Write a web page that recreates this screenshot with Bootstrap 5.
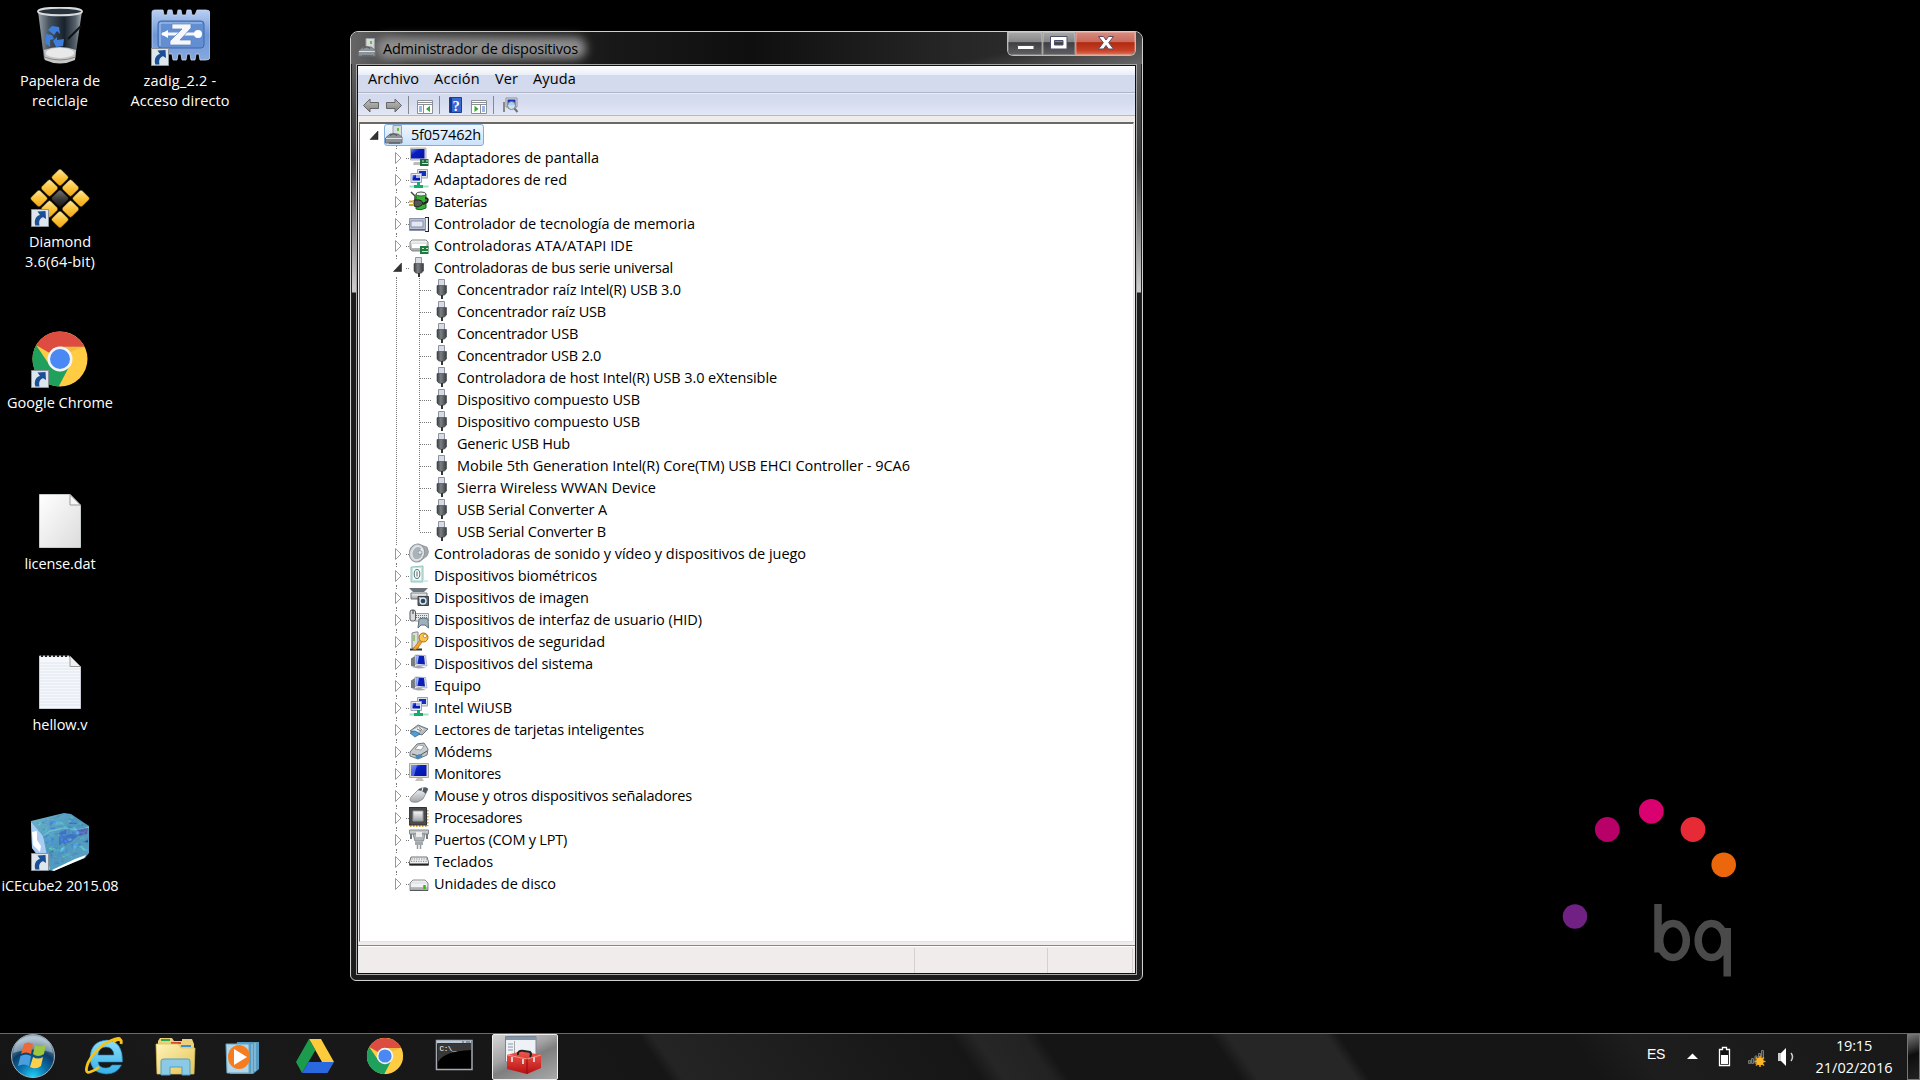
<!DOCTYPE html>
<html lang="es">
<head>
<meta charset="utf-8">
<meta name="viewport" content="width=device-width, initial-scale=1">
<title>Administrador de dispositivos</title>
<link rel="stylesheet" href="https://cdn.jsdelivr.net/npm/bootstrap@5.3.0/dist/css/bootstrap.min.css">
<style>
body{background:#000;color:#000;font:14.5px/20px "Open Sans","Noto Sans",sans-serif;letter-spacing:-.35px;width:1920px;height:1080px}
svg{display:block;flex:none}
.desktop-icons{padding-top:7px;width:240px}
.shortcut{width:120px;height:161px;color:#fff;text-align:center;white-space:nowrap}
.shortcut .pic{width:60px;height:60px}
.label-text{padding-top:4px;width:130px}
.win{position:absolute;left:350px;top:31px;width:793px;height:950px;border:1px solid #cfcfcf;border-radius:8px 8px 6px 6px;background:#161616;padding:0 5px 5px;box-shadow:inset 0 0 0 1px #222}
.win-edges{background:linear-gradient(#6f6f6f,#4a4a4a 80px,#3b3b3b 130px,#c9c9c9 255px,#c9c9c9 260px,#1c1c1c 261px,#1c1c1c)}
.title-strip{height:32px;margin:0 -5px;border-radius:7px 7px 0 0;padding-left:7px;background:linear-gradient(168deg,rgba(0,0,0,0) 60%,rgba(120,120,120,.75) 100%) right/330px 100% no-repeat,linear-gradient(90deg,#666,#3c3c3c 60px,#181818 260px,#0f0f0f 400px,#262626 600px,#333)}
.title-glow{position:relative;z-index:0;margin-left:5px;padding-top:1px}
.title-glow::before{content:"";position:absolute;z-index:-1;inset:-1px -8px 0 -6px;background:#8f8f8f;filter:blur(5px);border-radius:10px}
.caption-btns{height:24px;margin-right:6px;border:1px solid #bbb;border-top:0;border-radius:0 0 6px 6px;overflow:hidden}
.cap{border-right:1px solid #a5a5a5;box-shadow:inset 0 0 0 1px rgba(255,255,255,.22);background:linear-gradient(#aaa,#858585 44%,#3f3f43 46%,#616163)}
.cap.close-btn{border:0;background:linear-gradient(#d98c80,#c9695a 44%,#b02a10 46%,#c64026 80%,#d77a60)}
.client{flex:1;border:1px solid #a5a5a5;box-shadow:inset 0 0 0 1px #111;padding:1px;background:#f0eceb}
.menu-strip{height:27px;padding-left:10px;gap:15px;background:linear-gradient(#fff,#e9edf7 9px,#d4daed 9.5px,#d4daed);border-bottom:1px solid #b0b5c5}
.tool-strip{height:22px;margin-top:1px;background:linear-gradient(#d4daed,#d6dcef 40%,#e3e8f6);border-bottom:1px solid #b4b9ca}
.tree-pane{flex:1;margin-top:6px;margin-left:1px;margin-right:1px;background:#fff;border:2px solid #696969;border-right:1px solid #e3e3e3;border-bottom:1px solid #e3e3e3;border-left-width:1px}
.node{height:22px;line-height:22px;white-space:pre}
.node>span{padding-top:.6px}
.root-sel{height:22px;border:1px solid #84acdd;border-radius:3px;background:linear-gradient(#eff6fd,#cbe2fa);width:100px;line-height:20px;margin-left:5px}
.root-sel span{margin-left:6px}
.status{height:28px;border-top:1px solid #868686;margin-top:3px;box-shadow:inset 0 1px #fff}
.status div{border-right:1px solid #d5d1d0;margin-top:2px}
.bq-word{position:absolute}
.taskbar{position:absolute;left:0;right:0;bottom:0;height:47px;border-top:1px solid #6a6a6a;background:linear-gradient(55deg,#151515,#191919 10%,#161616 34.300%,#242424 35%,#181818 47%,#161616 50.300%,#262626 51.500%,#222 54%,#151515 54.800%,#151515 63.600%,#262626 64.500%,#262626 69.500%,#151515 70.200%,#151515 82%,#1d1d1d 85%,#181818);color:#fff}
.active-task{width:66px;height:46px;border:1px solid #eee;border-radius:2px;background:linear-gradient(155deg,#d5d5d5,#a3a3a3 40%,#7f7f7f 55%,#a9a9a9)}
.show-desk{width:13px;height:46px;border:1px solid #777;background:linear-gradient(160deg,#777,#333 30%,#0e0e0e 45%,#222)}
</style>
</head>
<body class="overflow-hidden position-relative">

<svg width="0" height="0" class="position-absolute">
<defs>
<linearGradient id="gGrey" x2="0" y2="1"><stop stop-color="#fafafa"/><stop offset="1" stop-color="#9ea3a8"/></linearGradient>
<linearGradient id="gScr" x2="1" y2="1"><stop stop-color="#6f8ff0"/><stop offset=".35" stop-color="#0a1fc4"/><stop offset="1" stop-color="#0414a0"/></linearGradient>
<linearGradient id="gGold" x2="1" y2="1"><stop stop-color="#ffe9a8"/><stop offset=".5" stop-color="#fcc53c"/><stop offset="1" stop-color="#f0a010"/></linearGradient>
<linearGradient id="gDark" x2="1" y2="1"><stop stop-color="#777"/><stop offset=".6" stop-color="#333"/><stop offset="1" stop-color="#111"/></linearGradient>
<linearGradient id="gBin" x2="1"><stop stop-color="#9aa3aa"/><stop offset=".25" stop-color="#46525e"/><stop offset=".6" stop-color="#18222c"/><stop offset=".85" stop-color="#56616b"/><stop offset="1" stop-color="#aab2b8"/></linearGradient>
<linearGradient id="gZ" x2="0" y2="1"><stop stop-color="#b9cff2"/><stop offset=".5" stop-color="#6d97d8"/><stop offset="1" stop-color="#86a8df"/></linearGradient>
<linearGradient id="gPlug" x2="1"><stop stop-color="#3a3d40"/><stop offset=".4" stop-color="#7c8084"/><stop offset="1" stop-color="#383b3e"/></linearGradient>
<radialGradient id="gOrb" cx=".5" cy="1" r="1"><stop stop-color="#20d4ff"/><stop offset=".35" stop-color="#0b6fa8"/><stop offset=".62" stop-color="#0c3c66"/><stop offset=".9" stop-color="#8aa5b8"/></radialGradient>
<linearGradient id="gE" x2="0" y2="1"><stop stop-color="#8fe0fa"/><stop offset="1" stop-color="#35b1e8"/></linearGradient>
<linearGradient id="gFold" x2="1" y2="1"><stop stop-color="#fff3b8"/><stop offset="1" stop-color="#e3c455"/></linearGradient>
<linearGradient id="gIce" x2="1" y2="1"><stop stop-color="#6fb4cc"/><stop offset=".5" stop-color="#4e97bd"/><stop offset="1" stop-color="#5fa3c2"/></linearGradient>
<linearGradient id="gRed" x2="0" y2="1"><stop stop-color="#ef5a4c"/><stop offset="1" stop-color="#b80f12"/></linearGradient>
<linearGradient id="gPaper" x2="1" y2="1"><stop stop-color="#fff"/><stop offset="1" stop-color="#dcdcdc"/></linearGradient>
<filter id="frost" x="0" y="0" width="1" height="1" color-interpolation-filters="sRGB"><feTurbulence type="fractalNoise" baseFrequency=".16 .22" numOctaves="3" seed="8"/><feColorMatrix values="0 .5 0 0 .05  0 1.3 0 0 -.05  0 0 .8 0 .4  2.600 0 0 0 -1.050"/><feComposite in2="SourceAlpha" operator="in"/></filter>

<symbol id="arrowbadge" viewBox="0 0 18 18"><path d="M.5.5h17v17H.5z" fill="#dde6ec" stroke="#8c9499"/><path d="M4.300 16.500C2.500 10 6 6.500 9 6L6.500 2.500 14.500 2 15 10 12.200 8.300C9 9 7.500 12 8.500 16.500z" fill="#1b4f96"/></symbol>
<symbol id="bin" viewBox="0 0 60 60"><path d="M8 5 14 53Q30 60 45 53L52 5z" fill="url(#gBin)"/><path d="M14 44 14.800 54Q30 61 45 54L46 44Q30 38 14 44z" fill="#c6c6c6"/><ellipse cx="30" cy="47" rx="14" ry="5" fill="#e9e9e9"/><path d="M14 51Q30 57 45.500 51" fill="none" stroke="#888"/><ellipse cx="30" cy="5.500" rx="22" ry="3.800" fill="#27323d" stroke="#d8dadb" stroke-width="2"/><path d="M38 33 51 20" stroke="#111" stroke-width="2"/><g fill="#3e7fdc"><path d="M18 24 22 20 29 21 30 28 27 25 24 29z"/><path d="M16 28 22 29 24 33 20 34 20 41 15 37z"/><path d="M23 35 27 31 27 34 34 33 33 40 26 41z"/></g></symbol>
<symbol id="zadig" viewBox="0 0 60 60"><path d="M2 5Q2 3 5 3H13L14 8H17L18 3H22L23 8H27L28 3H31L32 8H36L37 3H41L42 8H45L47 3H56Q60 3 60 6V50Q60 53 56 53H50L49 47H46L45 53H41L40 47H37L36 53H32L31 47H28L27 53H23L22 47H5Q2 47 2 44z" fill="url(#gZ)" stroke="#c6d7f3" stroke-width=".8"/><rect x="8" y="14" width="46" height="27" rx="3" fill="#638fd2" stroke="#3e68ab"/><path d="M10 39V16H52" fill="none" stroke="#b2caef"/><path d="M12 27H50" stroke="#f4f8fd" stroke-width="3"/><path d="M11 27 18 23V31z" fill="#fff"/><circle cx="48" cy="27" r="4" fill="#fff"/><path d="M22 17H41V21L30 33H41V38H20V34L32 22H22z" fill="#f5f7fb" stroke="#5b80bb" stroke-width=".7"/></symbol>
<symbol id="diamond" viewBox="0 0 60 60"><g stroke="#1a1200" stroke-width=".6"><g fill="url(#gGold)"><rect x="-6.500" y="-6.500" width="13" height="13" rx="2" transform="translate(30 9.500) rotate(45)"/><rect x="-6.500" y="-6.500" width="13" height="13" rx="2" transform="translate(19.500 20) rotate(45)"/><rect x="-6.500" y="-6.500" width="13" height="13" rx="2" transform="translate(40.500 20) rotate(45)"/><rect x="-6.500" y="-6.500" width="13" height="13" rx="2" transform="translate(9 30.500) rotate(45)"/><rect x="-6.500" y="-6.500" width="13" height="13" rx="2" transform="translate(51 30.500) rotate(45)"/><rect x="-6.500" y="-6.500" width="13" height="13" rx="2" transform="translate(19.500 41) rotate(45)"/><rect x="-6.500" y="-6.500" width="13" height="13" rx="2" transform="translate(40.500 41) rotate(45)"/><rect x="-6.500" y="-6.500" width="13" height="13" rx="2" transform="translate(30 51.500) rotate(45)"/></g><rect x="-6.500" y="-6.500" width="13" height="13" rx="2" transform="translate(30 30.500) rotate(45)" fill="url(#gDark)"/></g></symbol>
<symbol id="chrome" viewBox="0 0 56 56"><circle cx="28" cy="28" r="27.500" fill="#fc4"/><path d="M28 28 4.200 14.200A27.500 27.500 0 0 1 52.500 15.800H28z" fill="#dc4c40"/><path d="M4.200 14.200 17.500 34 28 40.500 38 34 26.700 55.500A27.500 27.500 0 0 1 4.200 14.200z" fill="#20a05d"/><path d="M28 15.800H52L38 21z" fill="#d99c2a" opacity=".35"/><circle cx="28" cy="28" r="12.500" fill="#f4f4f4"/><circle cx="28" cy="28" r="10" fill="#4a89f3"/></symbol>
<symbol id="paper" viewBox="0 0 42 54"><path d="M.5.5H31L41.500 11.500V53.500H.5z" fill="url(#gPaper)" stroke="#c5cbc8"/><path d="M31 .5V11H41.500z" fill="#f5f5f5" stroke="#999"/></symbol>
<symbol id="notes" viewBox="0 0 42 54"><path d="M.5 1H31L41.500 12V53.500H.5z" fill="#f5f7fb" stroke="#c9ccd6"/><path d="M1 8H30M1 11H31M1 14H41M1 17H41M1 20H41M1 23H41M1 26H41M1 29H41M1 32H41M1 35H41M1 38H41M1 41H41M1 44H41M1 47H41M1 50H41" stroke="#dfe5f0"/><path d="M2 1H31" stroke="#222" stroke-width="2" stroke-dasharray="2 2"/><path d="M31 1V11.500H41.500z" fill="#f0f0f0" stroke="#999"/></symbol>
<symbol id="ice" viewBox="0 0 60 60"><path d="M1 9 34 1 41 2 59 14V41L55 46 23 59 18 58 2 36z" fill="url(#gIce)"/><path d="M1 10 13 24 20 58 2 36z" fill="#a9cdf2"/><path d="M13 24 20 19 34 16 48 18 59 15" fill="none" stroke="#6fc0cf" stroke-width="1.500"/><path d="M29 21 37 17 36 23 52 20 41 30 29 33zM40 6 48 12 39 12z" fill="#3c66c6" opacity=".8"/><path d="M47 18 58 16 57 22 49 24z" fill="#64599c"/><path d="M6 10 34 2 40 3 58 15V38L24 54 13 25z" fill="#000" filter="url(#frost)" opacity=".75"/><path d="M2 20 7 19 7 28 11 34 10 40 3 33zM22 58 45 47 56 43 54 46 24 59z" fill="#fff"/></symbol>

<symbol id="usb" viewBox="0 0 20 20"><path d="M6.500.5H12.500V8H6.500z" fill="#d9dce4" stroke="#8f93a3"/><path d="M5 6.500H14.500V14Q13 16.500 9.500 16.500T5 14z" fill="url(#gPlug)" stroke="#404347" stroke-width=".6"/><path d="M10 16V20" stroke="#333" stroke-width="2"/></symbol>
<symbol id="display" viewBox="0 0 20 20"><path d="M1.500 1H17V13H1.500z" fill="#d6d6d6" stroke="#b4b4b4"/><path d="M2 2H15.500V11.500H2z" fill="url(#gScr)"/><path d="M5 15H11L12 18H4z" fill="#bbb"/><path d="M11 12H19.500V19H11z" fill="#1f6a42"/><path d="M13 14H15M17 14H19M13 16.500H19" stroke="#c9e6b8"/></symbol>
<symbol id="net" viewBox="0 0 20 20"><path d="M8.500.5H18.500V9H8.500z" fill="#dcdfe8" stroke="#9aa2b8"/><path d="M10 2H17V7H10z" fill="#162cc0"/><path d="M2 4.500H12.500V13.500H2z" fill="#e4e8f2" stroke="#9aa2b8"/><path d="M3.500 6H11V11.500H3.500z" fill="url(#gScr)"/><path d="M7 5H11V9H7z" fill="#fff" opacity=".65"/><path d="M9.500 13V17M5 17.500H14" stroke="#0fae6b" stroke-width="3"/><path d="M.5 17.500H5M14 17.500H19.500" stroke="#a6dcc3" stroke-width="2"/></symbol>
<symbol id="batt" viewBox="0 0 20 20"><path d="M7 3H17V17Q12 20 7 18z" fill="#33b234" stroke="#17651c"/><ellipse cx="12" cy="3" rx="5" ry="2" fill="#e9f2e9" stroke="#555"/><path d="M2 1 6 5V9" fill="none" stroke="#444" stroke-width="1.500"/><path d="M16 7Q20 7 18 11L14 13" fill="none" stroke="#222" stroke-width="2"/><path d="M5 9H10Q15 10 13 14L9 16 5 15z" fill="#555" stroke="#222"/><path d="M0 10.500H5M0 14H5" stroke="#d9a62c" stroke-width="2"/></symbol>
<symbol id="mem" viewBox="0 0 20 20"><path d="M.5 5.500H16.500V17.500H.5z" fill="#b9c0d3" stroke="#8b93a8"/><path d="M2 8H14V14H2z" fill="#e4e8f1" stroke="#8990a8"/><path d="M16 4.500H19.500V18.500H16" fill="none" stroke="#20222e" stroke-width="1.200"/><path d="M1 16.500H16" stroke="#636b86"/></symbol>
<symbol id="ata" viewBox="0 0 20 20"><path d="M1 7 3 5H17L19 7V14L17 16H3L1 14z" fill="url(#gGrey)" stroke="#888"/><path d="M3 9H17V13H3z" fill="#fff"/><path d="M11 11H19.500V19H11z" fill="#1f7a42"/><path d="M13 13.500H15M17 13.500H19M13 16.500H19" stroke="#c9e6b8"/></symbol>
<symbol id="sound" viewBox="0 0 20 20"><path d="M9 1 18 4Q21 9 18 13L10 19z" fill="#a3aab0" stroke="#7e868c" stroke-width=".6"/><ellipse cx="8" cy="10" rx="7.600" ry="9" transform="rotate(14 8 10)" fill="#d5d9dd" stroke="#8f969c"/><ellipse cx="8.500" cy="10" rx="5.500" ry="6.800" transform="rotate(14 8 10)" fill="#aab3ba" stroke="#e6e9eb"/><path d="M8 10 13 5 14 10z" fill="#eceff1"/><circle cx="11" cy="9.500" r="2" fill="#dfe4e8" stroke="#7c858c" stroke-width=".7"/></symbol>
<symbol id="bio" viewBox="0 0 20 20"><path d="M2 2 14 1V17L2 17z" fill="#c6e4e0" stroke="#91c6c1"/><path d="M4 3H12V15H4z" fill="#f5fbfa"/><g fill="none" stroke="#5d6d70"><ellipse cx="8" cy="9" rx="2.800" ry="4.500"/><path d="M8 6.500V11.500"/></g><path d="M14 16H19" stroke="#d5ece9" stroke-width="2"/></symbol>
<symbol id="image" viewBox="0 0 20 20"><path d="M0 1H19L15 5H4z" fill="#6c757b"/><path d="M2 6H18V12H2z" fill="url(#gGrey)" stroke="#70777c"/><path d="M9 9.500H19.500V18.500H9z" fill="#59656d" stroke="#394248"/><circle cx="14" cy="14" r="3" fill="#29486a" stroke="#e3e8ec" stroke-width="1.300"/><path d="M10 11H12" stroke="#fff"/></symbol>
<symbol id="hid" viewBox="0 0 20 20"><path d="M6 4.500H19.500V12H6z" fill="#e6e9eb" stroke="#9aa1a6"/><path d="M7 6.500H19M7 8.500H19" stroke="#6c757b" stroke-dasharray="1 1"/><rect x="1" y="1" width="5.500" height="11" rx="2" fill="#d9dcdf" stroke="#545b60"/><path d="M4 1V5" stroke="#333"/><path d="M9 19 10 10Q15 8 19 10L19.500 19 16 16H12z" fill="#9db1bd" stroke="#5d6d78"/></symbol>
<symbol id="sec" viewBox="0 0 20 20"><path d="M3 2 7 1H9V17H3z" fill="#dcdfe0" stroke="#83888b"/><path d="M5 4V10" stroke="#7ac143" stroke-width="1.500"/><path d="M1 18.500H13" stroke="#333" stroke-width="2"/><path d="M11 9 4 18 6 19 9 17 13 11" fill="#f2a52b" stroke="#ad6d12" stroke-width=".7"/><circle cx="14.500" cy="6.500" r="4.500" fill="#fbc24e" stroke="#ad6d12"/><circle cx="16" cy="5" r="1.700" fill="#fff" stroke="#ad6d12" stroke-width=".6"/></symbol>
<symbol id="pc" viewBox="0 0 20 20"><path d="M2 5.500 6 3V14L2 13z" fill="#777c80"/><path d="M6 2 16.500 2.500 18 13 6.500 12z" fill="#e3e5e8" stroke="#9ba1a6" stroke-width=".7"/><path d="M7 2.500 15 3 16 11.500 7.500 10.800z" fill="#0a1fb8"/><path d="M7 2.500 10 2.700 8.500 10.800H7.500z" fill="#9fb0f8"/><path d="M3 14 10 12.500 17 15 9 15.500z" fill="#a2a6aa"/></symbol>
<symbol id="card" viewBox="0 0 20 20"><path d="M1 12 9 6 19 10 13 16z" fill="#b4bcc2" stroke="#697177"/><path d="M4 11 10 8 15 10 9 13z" fill="#eef2f4"/><path d="M8 10 12 12M10 8.500 13 11" stroke="#6c757b"/><path d="M1 14 6 12 11 15 6 18z" fill="#4e9fd6" stroke="#2d638d" stroke-width=".7"/></symbol>
<symbol id="modem" viewBox="0 0 20 20"><path d="M1 11 8 3 15 2 19 8 18 14 9 18 1 15z" fill="#c6cbcf" stroke="#6f767b"/><path d="M6 8 10 4 15 5 12 9z" fill="#fff" stroke="#777" stroke-width=".6"/><path d="M3 13 10 15 18 10" fill="none" stroke="#555"/><path d="M6 16 10 13 14 15 9 18z" fill="#418ac2"/></symbol>
<symbol id="monitor" viewBox="0 0 20 20"><path d="M.5.500H19.500V14.500H.5z" fill="#dcdad4" stroke="#aaa79e"/><path d="M2 2H17.500V13H2z" fill="url(#gScr)"/><path d="M2 2H8L5 13H2z" fill="#7f98f6" opacity=".6"/><path d="M8 15H13L15 18H6z" fill="#c4c1b8"/></symbol>
<symbol id="mouse" viewBox="0 0 20 20"><path d="M10 4Q17 1 19 4L14 14Q9 18.500 3 17Q-1 15 3 11z" fill="url(#gGrey)" stroke="#80868c" stroke-width=".8"/><path d="M10 4Q17 1 19 4L16.500 9Q14 5 9 5.500z" fill="#4f5a66"/><path d="M14 2.500 13 6" stroke="#fff"/></symbol>
<symbol id="cpu" viewBox="0 0 20 20"><path d="M18.500 3V19M1 19H18" fill="none" stroke="#dba338" stroke-width="2" stroke-dasharray="1.500 1.500"/><path d="M0 .5H17.500V18H0z" fill="#4a4b4c" stroke="#333"/><path d="M4 4H14V14H4z" fill="url(#gGrey)" stroke="#999"/></symbol>
<symbol id="port" viewBox="0 0 20 20"><path d="M.5 1H19.500V5H.5z" fill="#c4c9cc" stroke="#838b90"/><path d="M4 5H16L14.500 12H6z" fill="#b2b8bc" stroke="#858c91"/><path d="M7 3H13V8H7z" fill="#eee"/><path d="M6 12.500H14V16H6z" fill="#a2a8ac"/><path d="M8.500 16V20M11.500 16V20" stroke="#999" stroke-width="1.500"/><path d="M2 5V10M18 5V10" stroke="#777" stroke-width="2"/></symbol>
<symbol id="keyb" viewBox="0 0 20 20"><path d="M2 6H18L19.500 11V14H.5V11z" fill="#f0f1f2" stroke="#6e7376"/><path d="M2.500 8H18M2 10.300H18.500" stroke="#7a7f84" stroke-dasharray="1.200 1.200"/><path d="M.5 13.500H19.500" stroke="#222" stroke-width="2"/></symbol>
<symbol id="disk" viewBox="0 0 20 20"><path d="M1 10 4 7H16L19 10V17.500H1z" fill="url(#gGrey)" stroke="#8b8f92"/><path d="M2 10.500H18V14H2z" fill="#f2f2f2"/><path d="M1 17.500H19" stroke="#55595c"/><path d="M15.500 12V16" stroke="#37b51f" stroke-width="2.500"/></symbol>
<symbol id="host" viewBox="0 0 20 20"><path d="M8 .5H16.500V17H8z" fill="#dadddf" stroke="#9ca1a4"/><path d="M13 3V6" stroke="#5fc238" stroke-width="2"/><path d="M.5 13 5 9H13L17 12V18H.5z" fill="#8b9399" stroke="#6c7276"/><path d="M5 10.500Q9 7 12 10.500" fill="none" stroke="#555" stroke-width="1.200"/><path d="M1 13.500H17" stroke="#dfe3e6"/><path d="M4 18H15" stroke="#5c6367" stroke-width="1.500"/></symbol>
</defs>
</svg>

<div class="desktop-icons d-flex">
  <div class="d-flex flex-column" id="colA"></div>
  <div class="d-flex flex-column" id="colB"></div>
</div>

<svg class="bq-word" style="left:1550px;top:790px" width="200" height="200" viewBox="1550 790 200 200">
  <circle cx="1575" cy="916.500" r="12.200" fill="#712083"/><circle cx="1607.300" cy="829.500" r="12.400" fill="#b80069"/><circle cx="1651.300" cy="811.300" r="12.400" fill="#da0070"/><circle cx="1693" cy="829.500" r="12.400" fill="#e62a36"/><circle cx="1723.700" cy="864.700" r="12.300" fill="#ec660b"/>
  <g fill="none" stroke="#4a4a4a" stroke-width="7.500"><path d="M1658 904V952.500"/><ellipse cx="1673" cy="940.500" rx="13.300" ry="17"/><ellipse cx="1711.500" cy="940.500" rx="13.300" ry="17"/><path d="M1727.200 928V976.500"/></g>
</svg>

<main class="win win-edges d-flex flex-column">
  <header class="title-strip d-flex justify-content-between">
    <div class="d-flex align-items-center">
      <svg width="20" height="20"><use href="#host"/></svg>
      <div class="title-glow" data-w="194">Administrador de dispositivos</div>
    </div>
    <div class="caption-btns d-flex">
      <div class="cap" style="width:35px"><svg width="35" height="24"><path d="M9.500 13.500H26V17.500H9.500z" fill="#fff" stroke="#4b5068"/></svg></div>
      <div class="cap" style="width:33px"><svg width="33" height="24"><path fill-rule="evenodd" d="M7.500 4.500H24V17H7.500zM11.500 8.500V13H20V8.500z" fill="#fff" stroke="#4b5068"/></svg></div>
      <div class="cap close-btn" style="width:59px"><svg width="59" height="24"><path d="M22.500 4.500H27.500L30 8 32.500 4.500H37.500L32.700 10.700 37.500 17H32.500L30 13.500 27.500 17H22.500L27.300 10.700z" fill="#fff" stroke="#5b4a5c"/></svg></div>
    </div>
  </header>
  <div class="client d-flex flex-column">
    <nav class="menu-strip d-flex align-items-center">
      <span data-w="50">Archivo</span><span data-w="45">Acción</span><span data-w="22">Ver</span><span data-w="42">Ayuda</span>
    </nav>
    <div class="tool-strip d-flex align-items-center">
      <svg width="200" height="22" viewBox="0 0 200 22">
        <defs><linearGradient id="gAr" x2="0" y2="1"><stop stop-color="#c2c2c2"/><stop offset="1" stop-color="#828282"/></linearGradient></defs>
        <path d="M5.500 11.500 12 5V8.500H20.500V14.500H12V18z" fill="url(#gAr)" stroke="#666"/>
        <path d="M43.500 11.500 37 5V8.500H28.500V14.500H37V18z" fill="url(#gAr)" stroke="#666"/>
        <path d="M50.500 2V20M81.500 2V20M135.500 2V20" stroke="#85888f"/>
        <g fill="#fff" stroke="#8c8f94"><path d="M59.500 6.500H74.500V19.500H59.500zM113.500 6.500H128.500V19.500H113.500z"/><path d="M59 8.500H75M59 10.500H75M113 8.500H129M113 10.500H129M65.500 10V19M122.500 10V19"/></g>
        <path d="M61 13H64M61 15H64M61 17H64M124 13H127M124 15H127M124 17H127" stroke="#3d6ec9"/>
        <path d="M68 15 72 11.800V18zM120.500 15 116.500 11.800V18z" fill="#35a82a"/>
        <path d="M91.500 3.500H103.500V18.500H91.500z" fill="#3866d2" stroke="#1c3c96"/><path d="M92 4H94V18H92z" fill="#173488"/>
        <text x="94.500" y="16.500" font-size="14.500" font-family="Liberation Serif" font-weight="700" fill="#fff">?</text>
        <path d="M148 4H159V13H148z" fill="#e3e5ea" stroke="#8a8f9b"/><path d="M149.500 5.500H157.500V11.500H149.500z" fill="#1831bd"/><path d="M145 8H147V18H145z" fill="#888"/><circle cx="153.500" cy="11.500" r="4" fill="#d0e6fa" fill-opacity=".85" stroke="#70808e"/><path d="M156.500 14.500 159.500 18" stroke="#6c7176" stroke-width="2"/>
      </svg>
    </div>
    <section class="tree-pane" id="tree"></section>
    <footer class="status d-flex"><div style="width:557px"></div><div style="width:133px"></div><div style="width:85px"></div></footer>
  </div>
</main>

<footer class="taskbar d-flex justify-content-between">
  <svg width="492" height="46" viewBox="0 1034 492 46">
    <circle cx="33" cy="1056" r="21.500" fill="url(#gOrb)" stroke="#9db0bc"/>
    <path d="M13 1053Q16 1036 33 1036T53 1053Q34 1046 13 1053z" fill="#fff" opacity=".35"/>
    <path d="M24 1044Q28 1041 33 1044L31 1054Q26 1051 21 1054z" fill="#ec6a38"/><path d="M35 1045Q41 1048 46 1044L44 1054Q38 1058 33 1054z" fill="#9cc740"/><path d="M20.500 1056Q26 1053 31 1056L29 1066Q24 1063 18 1066z" fill="#4a9fe0"/><path d="M33 1057Q38 1060 43 1057L41 1066Q36 1070 30 1067z" fill="#fbd04c"/>
    <path fill-rule="evenodd" d="M122.500 1062H98Q99 1068 106 1068 110 1068 112 1065H121.500Q117 1074 106 1074 90 1073 90 1057 91 1041 107 1040 123 1041 122.500 1062zM98 1055H114Q113 1047 106 1047T98 1055z" fill="url(#gE)" stroke="#1b7fb8" stroke-width=".6"/>
    <path d="M113 1042Q123 1036 121 1044M119 1041Q122 1037 115 1039Q97 1045 88 1063Q84 1074 90 1072Q96 1070 99 1067" fill="none" stroke="#f4c31c" stroke-width="2.800"/>
    <path d="M158 1041 160 1038H172L174 1041H182V1039H192L194 1044V1074H157z" fill="#ebd27a"/><path d="M161 1039H170V1041H161z" fill="#2ca84f"/><path d="M171 1042H181V1044H171z" fill="#d94a2c"/><path d="M181 1045H191V1047H181z" fill="#3d8ed4"/><path d="M156 1044H178L181 1048H195L194 1074H157z" fill="url(#gFold)" stroke="#d9bd5a" stroke-width=".7"/><path d="M161 1075V1061Q161 1059 164 1059H188Q190 1059 190 1061V1075H182V1067H170V1075z" fill="#8cc9e6" stroke="#4e9fc4"/>
    <path d="M237 1042H259V1069L253 1074H230z" fill="#569bc1"/><path d="M226 1044H249V1073H227z" fill="#b3d6e8" stroke="#6ba6c6"/><path d="M252 1044V1073M255 1043V1071" stroke="#a9d2e8"/><ellipse cx="239" cy="1057" rx="11" ry="12" fill="#f57d20"/><path d="M234 1049 247 1057 234 1065z" fill="#fff"/>
    <path d="M309 1039H321L334 1062H322z" fill="#fdcb3c"/><path d="M309 1039 315.500 1050 302 1073 296 1062z" fill="#1c9b4c"/><path d="M308.500 1062H334L327.500 1073H302z" fill="#2a68e0"/>
    <svg x="366.500" y="1037.500" width="37" height="37"><use href="#chrome"/></svg>
    <path d="M436.500 1040.500H472V1069.500H436.500z" fill="#000" stroke="#a4aab2" stroke-width="1.500"/><path d="M437 1042H471" stroke="#bcc9d6" stroke-width="2.500"/><path d="M462 1042H464M466 1042H470" stroke="#4b5a70"/><path d="M438 1044H471V1050Q444 1051 438 1062z" fill="#383838"/><text x="439.500" y="1051" fill="#fff" font-family="Liberation Mono" font-size="7.500">C:\_</text>
  </svg>
  <div class="active-task me-auto">
    <svg width="64" height="44" viewBox="493 1035 64 44"><path d="M505.500 1036.500H536V1062H505.500z" fill="#eef1f5" stroke="#7c8490"/><path d="M506 1038.500H536" stroke="#8195ab" stroke-width="3"/><path d="M508 1044H513M508 1047H513M508 1050H513" stroke="#8899aa"/><path d="M514.500 1041V1056" stroke="#aaa"/><path d="M507 1055 521 1051 541 1055V1068L527 1074 507 1069z" fill="url(#gRed)"/><path d="M507 1055 527 1059 541 1055" fill="none" stroke="#f49186"/><path d="M527 1059V1074" stroke="#97090c"/><path d="M518 1055Q517 1050 524 1051L530 1052Q532 1054 530 1057" fill="none" stroke="#222" stroke-width="2"/><path d="M512 1057V1062M523 1059V1064M534 1057V1062" stroke="#ddd" stroke-width="1.800"/></svg>
  </div>
  <div class="d-flex align-items-start">
    <div class="me-3" style="padding-top:10px"><span class="d-block" data-w="17" style="font:14px/20px 'Liberation Sans'">ES</span></div>
    <svg width="120" height="46" viewBox="1681 1034 120 46"><path d="M1687 1059 1692.500 1053.500 1698 1059z" fill="#fff"/>
      <path d="M1722.500 1047.500H1726.500V1049.500H1729.500V1065.500H1719.500V1049.500H1722.500z" fill="#111" stroke="#fff" stroke-width="1.300"/><path d="M1721 1055H1728V1064H1721z" fill="#fff"/>
      <g fill="#3c3c3c" stroke="#777"><path d="M1748.500 1060.500H1750.500V1063.500H1748.500zM1751.500 1058.500H1753.500V1063.500H1751.500zM1755 1056H1757V1063.500H1755zM1758.500 1053.500H1760.500V1063.500H1758.500z"/><path d="M1761.500 1050.500H1763.500V1058H1761.500z"/></g><path d="M1760 1056V1067M1754.500 1061.500H1765.500M1756 1057.500 1764 1065.500M1764 1057.500 1756 1065.500" stroke="#f5a110" stroke-width="1.600"/><circle cx="1760" cy="1061.500" r="3.700" fill="#ffb728"/>
      <path d="M1778 1053H1781V1061H1778z" fill="#ccc"/><path d="M1781 1053 1786 1048V1066L1781 1061z" fill="#fff"/><path d="M1791 1053Q1794 1057 1791 1061" fill="none" stroke="#ccc" stroke-width="1.500"/></svg>
    <div class="text-center" style="width:106px;line-height:22px;padding-top:1px"><span data-w="35">19:15</span><br><span data-w="76">21/02/2016</span></div>
    <div class="show-desk"></div>
  </div>
</footer>

<script>
/* Desktop shortcuts: icon, width, height, top offset, shortcut arrow, text lines with their widths */
const colA=[["bin",60,60,-1,0,[["Papelera de",79],["reciclaje",55]]],["diamond",60,60,0,1,[["Diamond",61],["3.6(64-bit)",69]]],["chrome",56,56,2,1,[["Google Chrome",105]]],["paper",42,54,4,0,[["license.dat",70]]],["notes",42,54,4,0,[["hellow.v",54]]],["ice",60,60,0,1,[["iCEcube2 2015.08",116]]]];
const colB=[["zadig",60,60,0,1,[["zadig_2.2 -",72],["Acceso directo",98]]]];
const cell=([id,w,h,y,a,t])=>`<div class="shortcut d-flex flex-column align-items-center"><svg class="pic" viewBox="0 0 60 60"><svg x="${(60-w)/2}" y="${y}" width="${w}" height="${h}"><use href="#${id}"/></svg>${a?'<svg x="1" y="41" width="18" height="18"><use href="#arrowbadge"/></svg>':''}</svg><div class="label-text">${t.map(l=>`<span data-w="${l[1]}">${l[0]}</span>`).join("<br>")}</div></div>`;
document.getElementById("colA").innerHTML=colA.map(cell).join("");
document.getElementById("colB").innerHTML=colB.map(cell).join("");

/* Device tree: icon, name, text width, children */
const tree=[["display","Adaptadores de pantalla",164],["net","Adaptadores de red",132],["batt","Baterías",52],["mem","Controlador de tecnología de memoria",260],["ata","Controladoras ATA/ATAPI IDE",198],
["usb","Controladoras de bus serie universal",238,[["Concentrador raíz Intel(R) USB 3.0",223],["Concentrador raíz USB",148],["Concentrador USB",120],["Concentrador USB 2.0",143],["Controladora de host Intel(R) USB 3.0 eXtensible",319],["Dispositivo compuesto USB",182],["Dispositivo compuesto USB",182],["Generic USB Hub",112],["Mobile 5th Generation Intel(R) Core(TM) USB EHCI Controller - 9CA6",452],["Sierra Wireless WWAN Device",198],["USB Serial Converter A",149],["USB Serial Converter B",148]]],
["sound","Controladoras de sonido y vídeo y dispositivos de juego",371],["bio","Dispositivos biométricos",162],["image","Dispositivos de imagen",154],["hid","Dispositivos de interfaz de usuario (HID)",267],["sec","Dispositivos de seguridad",170],["pc","Dispositivos del sistema",158],["pc","Equipo",46],["net","Intel WiUSB",77],["card","Lectores de tarjetas inteligentes",209],["modem","Módems",57],["monitor","Monitores",66],["mouse","Mouse y otros dispositivos señaladores",257],["cpu","Procesadores",87],["port","Puertos (COM y LPT)",132],["keyb","Teclados",58],["disk","Unidades de disco",121]];
const dot='fill="none" stroke="#777" stroke-dasharray="1 1"',open='<path d="M0 8.500V0L-8 8.500z" fill="#333" stroke="#111" stroke-width=".5"/>';
let out=`<div class="node d-flex align-items-center"><svg width="19" height="22"><g transform="translate(18 7)">${open}</g></svg><div class="root-sel d-flex align-items-center"><svg width="20" height="20"><use href="#host"/></svg><span data-w="69">5f057462h</span></div></div>`;
tree.forEach(([ic,name,w,kids],k)=>{
  out+=`<div class="node d-flex"><svg width="74" height="22"><path d="M36.500 0V3${k<tree.length-1?"M36.500 21V22":""}M46 12.500H50" ${dot}/>${kids?`<g transform="translate(41.500 7)">${open}</g>`:'<path d="M35.500 6.500V17.500L41 12z" fill="#fff" stroke="#999"/>'}<svg x="49" y="1" width="20" height="20"><use href="#${ic}"/></svg></svg><span data-w="${w}">${name}</span></div>`;
  (kids||[]).forEach(([n,kw],i)=>{out+=`<div class="node d-flex"><svg width="97" height="22"><path d="M36.500 0V22M59.500 0V${i<kids.length-1?22:12}M60 12.500H72" ${dot}/><svg x="72" y="1" width="20" height="20"><use href="#usb"/></svg></svg><span data-w="${kw}">${n}</span></div>`});
});
document.getElementById("tree").innerHTML=out;

/* Tracking that brings each label to its set width */
document.querySelectorAll("[data-w]").forEach(e=>{
  e.style.letterSpacing="0px";
  const r=document.createRange();r.selectNodeContents(e);
  e.style.letterSpacing=((+e.dataset.w+1-r.getBoundingClientRect().width)/e.textContent.length).toFixed(3)+"px";
});
</script>
<script src="https://cdn.jsdelivr.net/npm/bootstrap@5.3.0/dist/js/bootstrap.bundle.min.js"></script>
</body>
</html>
